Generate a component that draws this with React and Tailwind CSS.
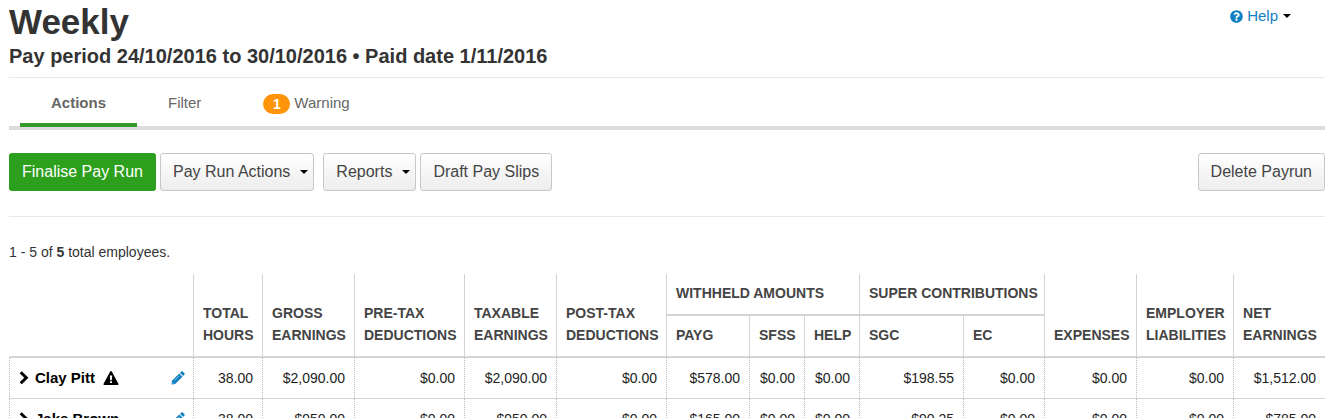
import React from 'react';
import { FaQuestionCircle } from 'react-icons/fa';

const columnWidths = [
  'w-[184px]', 'w-[69px]', 'w-[92px]', 'w-[110px]', 'w-[92px]', 'w-[110px]', 'w-[83px]',
  'w-[55px]', 'w-[55px]', 'w-[104px]', 'w-[81px]', 'w-[92px]', 'w-[97px]', 'w-[92px]',
];

const employees = [
  {
    name: 'Clay Pitt',
    warning: true,
    values: ['38.00', '$2,090.00', '$0.00', '$2,090.00', '$0.00', '$578.00', '$0.00', '$0.00', '$198.55', '$0.00', '$0.00', '$0.00', '$1,512.00'],
  },
  {
    name: 'Jake Brown',
    warning: false,
    values: ['38.00', '$950.00', '$0.00', '$950.00', '$0.00', '$165.00', '$0.00', '$0.00', '$90.25', '$0.00', '$0.00', '$0.00', '$785.00'],
  },
];

function Caret() {
  return (
    <svg className="h-1 w-2 shrink-0 text-black" viewBox="0 0 8 4" fill="currentColor" aria-hidden="true">
      <path d="M0 0h8L4 4z" />
    </svg>
  );
}

function ChevronIcon() {
  return (
    <svg className="h-[14px] w-[10px]" viewBox="0 0 10 14" fill="none" stroke="currentColor" strokeWidth="3" aria-hidden="true">
      <path d="M1.700 1.300 7.300 6.800l-5.600 5.500" />
    </svg>
  );
}

function WarningIcon() {
  return (
    <svg className="h-[14px] w-4" viewBox="0 0 16 14" aria-hidden="true">
      <path d="M7.200.6a.9.9 0 0 1 1.600 0l6.600 12.100a.9.9 0 0 1-.8 1.300H1.400a.9.9 0 0 1-.8-1.300z" fill="#000" />
      <path d="M6.800 4.500h2.400l-.4 4.700H7.200zM7 10.200h2v1.900H7z" fill="#fff" />
    </svg>
  );
}

function PencilIcon() {
  return (
    <svg className="h-[14px] w-[14px]" viewBox="0 0 14 14" fill="#0f80c1" aria-hidden="true">
      <path d="M8.300 2.500 11.500 5.700 4.200 13 .5 13.500 1 9.800z" />
      <path d="M9.100 1.900 10.400.6a1 1 0 0 1 1.400 0l1.600 1.600a1 1 0 0 1 0 1.400l-1.300 1.300z" />
      <path d="M3.800 9.200 8.300 4.700" stroke="#fff" strokeWidth=".5" />
      <path d="M1.700 11.200 2.900 12.400 2 12.500l-.5-.5z" fill="#fff" />
    </svg>
  );
}

function Button({ children, menu }) {
  return (
    <button
      type="button"
      aria-haspopup={menu ? 'menu' : undefined}
      className={
        'flex h-[38px] items-center gap-[10px] whitespace-nowrap rounded-[3px] border border-[#c8c8c8] bg-linear-to-b from-white to-[#ededed] pl-3 text-base text-[#444] ' +
        (menu ? 'pr-[5px]' : 'pr-3')
      }
    >
      {children}
      {menu && <Caret />}
    </button>
  );
}

function HeadCell({ children, grouped, ...rest }) {
  return (
    <th
      {...rest}
      className={
        'whitespace-nowrap border-b-2 border-l border-[#d4d4d4] pb-[10px] pl-[9px] text-left align-bottom text-sm leading-[22px] font-bold text-[#444] ' +
        (grouped ? 'h-[42px]' : '')
      }
    >
      {children}
    </th>
  );
}

function EmployeeRow({ employee }) {
  const cell = 'h-[41px] border-b border-l border-b-[#d4d4d4] border-l-[#bbb] [border-left-style:dotted]';
  return (
    <tr>
      <th scope="row" className={cell + ' pl-[9px] pr-2 text-left font-bold text-black'}>
        <div className="flex items-center">
          <button type="button" aria-label={'Expand ' + employee.name} className="mr-[6px]">
            <ChevronIcon />
          </button>
          <span className="mr-2">{employee.name}</span>
          {employee.warning && <WarningIcon />}
          <button type="button" aria-label={'Edit ' + employee.name} className="ml-auto">
            <PencilIcon />
          </button>
        </div>
      </th>
      {employee.values.map((value, i) => (
        <td key={i} className={cell + ' pr-[9px] text-right text-sm text-[#222]'}>
          {value}
        </td>
      ))}
    </tr>
  );
}

export default function App() {
  const tab = 'flex items-center px-[31px]';
  return (
    <main className="bg-white pt-px pr-[6px] pl-[9px] font-['Liberation_Sans',Arial,sans-serif] text-[15px] text-[#333]">
      <header className="flex items-start justify-between border-b border-[#e8e8e8] pb-2">
        <div>
          <h1 className="text-[35px] leading-[42px] font-bold">Weekly</h1>
          <h2 className="text-xl leading-[26px] font-bold">
            Pay period 24/10/2016 to 30/10/2016 • Paid date 1/11/2016
          </h2>
        </div>
        <button type="button" aria-haspopup="menu" className="mt-1 mr-[34px] flex items-center text-[#0f80c1]">
          <FaQuestionCircle className="mr-1 size-[13px]" aria-hidden="true" />
          <span className="mr-[5px]">Help</span>
          <Caret />
        </button>
      </header>

      <nav className="flex border-b-4 border-[#dcdcdc] pl-[11px] text-[#666]">
        <a href="#actions" aria-current="page" className={tab + ' -mb-px h-[49px] border-b-4 border-[#35992a] pt-[6px] font-bold'}>
          Actions
        </a>
        <a href="#filter" className={tab + ' h-12 pt-[3px]'}>Filter</a>
        <a href="#warning" className={tab + ' h-12 gap-1 pt-[3px]'}>
          <span className="flex h-5 w-[27px] items-center justify-center rounded-full bg-[#ff9408] text-sm font-bold text-white">1</span>
          Warning
        </a>
      </nav>

      <div className="flex items-center gap-1 border-b border-[#e8e8e8] pt-[23px] pb-[25px]">
        <button type="button" className="h-[38px] whitespace-nowrap rounded-[3px] bg-[#2ca01c] px-[13px] text-base text-white">
          Finalise Pay Run
        </button>
        <div className="mr-[5px]">
          <Button menu>Pay Run Actions</Button>
        </div>
        <Button menu>Reports</Button>
        <Button>Draft Pay Slips</Button>
        <div className="ml-auto">
          <Button>Delete Payrun</Button>
        </div>
      </div>

      <p className="pt-6 pb-[11px] text-sm leading-[22px]">
        1 - 5 of <b>5</b> total employees.
      </p>

      <table className="w-full table-fixed border-separate border-spacing-0">
        <colgroup>
          {columnWidths.map((width, i) => (
            <col key={i} className={width} />
          ))}
        </colgroup>
        <thead>
          <tr>
            <td rowSpan={2} className="border-b-2 border-[#d4d4d4]" />
            <HeadCell rowSpan={2}>TOTAL<br />HOURS</HeadCell>
            <HeadCell rowSpan={2}>GROSS<br />EARNINGS</HeadCell>
            <HeadCell rowSpan={2}>PRE-TAX<br />DEDUCTIONS</HeadCell>
            <HeadCell rowSpan={2}>TAXABLE<br />EARNINGS</HeadCell>
            <HeadCell rowSpan={2}>POST-TAX<br />DEDUCTIONS</HeadCell>
            <HeadCell colSpan={3} grouped>WITHHELD AMOUNTS</HeadCell>
            <HeadCell colSpan={2} grouped>SUPER CONTRIBUTIONS</HeadCell>
            <HeadCell rowSpan={2}>EXPENSES</HeadCell>
            <HeadCell rowSpan={2}>EMPLOYER<br />LIABILITIES</HeadCell>
            <HeadCell rowSpan={2}>NET<br />EARNINGS</HeadCell>
          </tr>
          <tr>
            <HeadCell grouped>PAYG</HeadCell>
            <HeadCell grouped>SFSS</HeadCell>
            <HeadCell grouped>HELP</HeadCell>
            <HeadCell grouped>SGC</HeadCell>
            <HeadCell grouped>EC</HeadCell>
          </tr>
        </thead>
        <tbody>
          {employees.map((employee) => (
            <EmployeeRow key={employee.name} employee={employee} />
          ))}
        </tbody>
      </table>
    </main>
  );
}
